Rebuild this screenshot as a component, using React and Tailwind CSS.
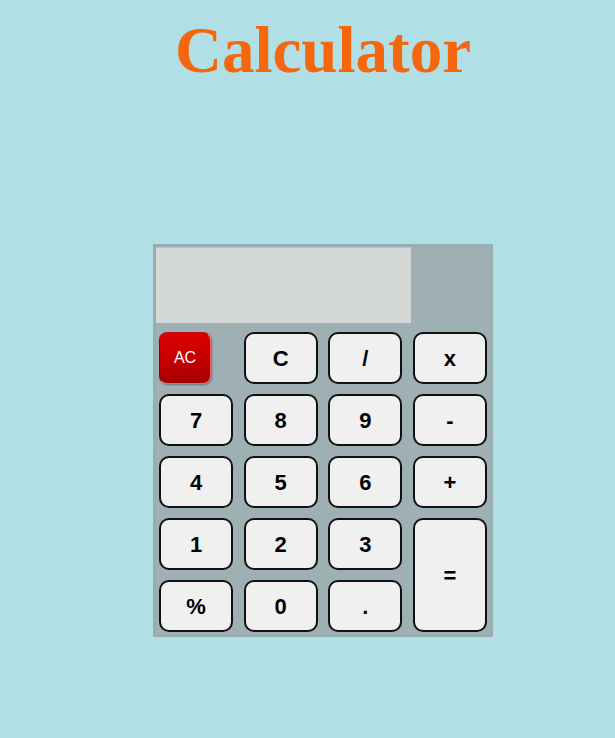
const keys = [
  { label: 'C' },
  { label: '/' },
  { label: 'x' },
  { label: '7' },
  { label: '8' },
  { label: '9' },
  { label: '-' },
  { label: '4' },
  { label: '5' },
  { label: '6' },
  { label: '+' },
  { label: '1' },
  { label: '2' },
  { label: '3' },
  { label: '=', tall: true },
  { label: '%' },
  { label: '0' },
  { label: '.' },
]

export default function App() {
  return (
    <div
      className="min-h-screen bg-[#b0e0e6] pl-[31px] pt-[13px]"
      style={{ fontFamily: '"Liberation Sans", Arial, sans-serif' }}
    >
      <h1
        className="text-center text-[65px] font-bold leading-[74px] text-[#f4670f]"
        style={{ fontFamily: '"Liberation Serif", "Times New Roman", serif' }}
      >
        Calculator
      </h1>

      <div className="mx-auto mt-[157px] w-[340px] border-[3px] border-[#99acaf] bg-[#9eb0b3] px-[3px] pb-[2px]">
        <div className="h-[76px] w-[255px] -mx-[3px] border-t border-[#bcc3c3] bg-[#d3d7d6]" />

        <div className="mt-[9px] grid grid-cols-[74px_74px_74px_74px] auto-rows-[52px] justify-between gap-y-[10px]">
          <button className="h-[52px] w-[52px] rounded-[8px] border border-[#e86a6a] border-l-[#9a0000] border-t-[#c01010] bg-gradient-to-b from-[#dc0000] via-[#c80000] to-[#a60000] text-[16px] text-white shadow-[1px_1px_2px_rgba(0,0,0,0.35)]">
            AC
          </button>
          {keys.map((k) => (
            <button
              key={k.label}
              className={
                k.tall
                  ? 'row-span-2 rounded-[10px] border-2 border-[#111] bg-[#f0f0f0] text-[22px] font-bold text-black'
                  : 'rounded-[10px] border-2 border-[#111] bg-[#f0f0f0] text-[22px] font-bold text-black'
              }
            >
              {k.label}
            </button>
          ))}
        </div>
      </div>
    </div>
  )
}
